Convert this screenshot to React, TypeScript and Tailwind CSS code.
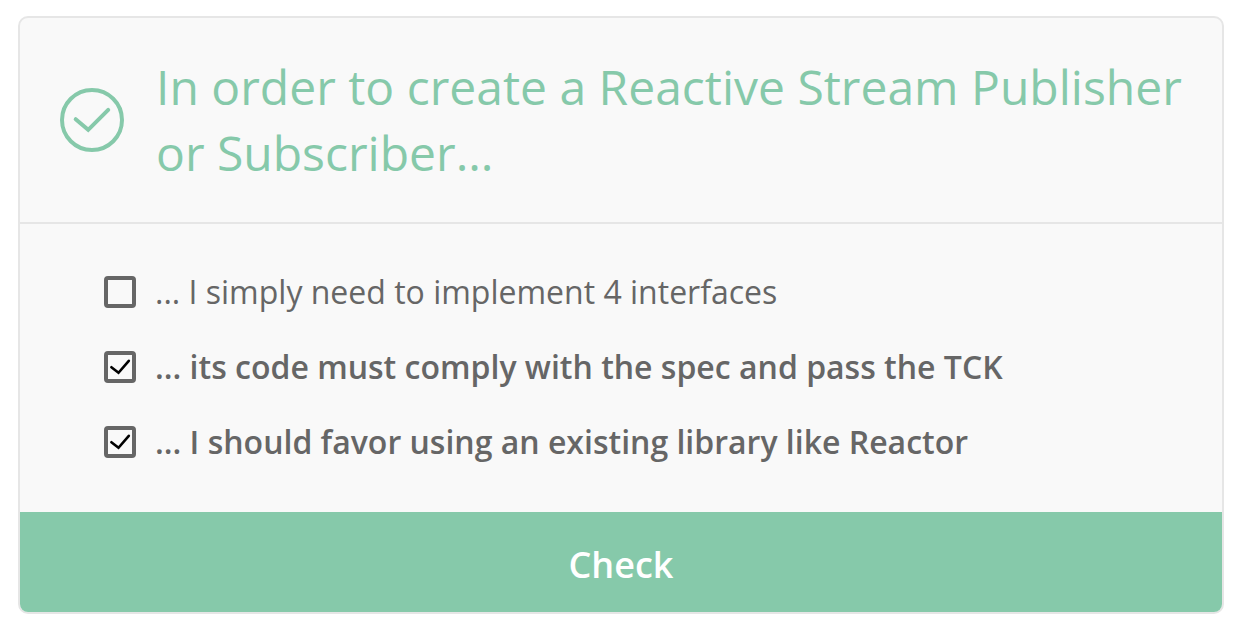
import { useState } from "react";

const answers = [
  { id: "interfaces", text: "... I simply need to implement 4 interfaces" },
  { id: "spec", text: "... its code must comply with the spec and pass the TCK" },
  { id: "library", text: "... I should favor using an existing library like Reactor" },
];

export default function App() {
  const [checked, setChecked] = useState<string[]>(["spec", "library"]);

  const toggle = (id: string) =>
    setChecked((prev) => (prev.includes(id) ? prev.filter((x) => x !== id) : [...prev, id]));

  return (
    <main className="min-h-screen bg-white pt-4 pr-4 pb-3 pl-[18px] font-['Open_Sans',sans-serif]">
      <form
        onSubmit={(e) => e.preventDefault()}
        className="overflow-hidden rounded-[10px] border-2 border-[#e6e6e6] bg-[#f9f9f9]"
      >
        <header className="flex items-center gap-8 border-b-2 border-[#e6e6e6] px-10 py-9 text-[#86c9aa]">
          <svg viewBox="0 0 64 64" className="size-16 shrink-0" fill="none" stroke="currentColor" strokeWidth="4" strokeLinecap="round" aria-hidden="true">
            <circle cx="32" cy="32" r="30" />
            <path d="M15.7 31.2 28.2 41.8 48.2 21.8" />
          </svg>
          <h1 className="text-[48px] leading-[66px]">
            In order to create a Reactive Stream Publisher or Subscriber...
          </h1>
        </header>
        <fieldset className="flex flex-col gap-[29px] px-[84px] pt-[45px] pb-[47px]">
          {answers.map(({ id, text }) => {
            const on = checked.includes(id);
            return (
              <label
                key={id}
                htmlFor={id}
                className={`flex items-center gap-[19px] text-[32px] leading-[46px] text-[#666666] ${on ? "font-semibold" : "font-normal"}`}
              >
                <span className="grid size-8 shrink-0">
                  <input
                    id={id}
                    type="checkbox"
                    checked={on}
                    onChange={() => toggle(id)}
                    className="col-start-1 row-start-1 size-8 appearance-none rounded-[4px] border-4 border-[#666666] bg-[#f9f9f9]"
                  />
                  {on && (
                    <svg viewBox="0 0 32 32" className="pointer-events-none col-start-1 row-start-1 size-8" fill="none" stroke="#000" strokeWidth="2.6" strokeLinecap="round" aria-hidden="true">
                      <path d="M7.4 16.2 14.5 21.8 24.8 9.8" />
                    </svg>
                  )}
                </span>
                <span>{text}</span>
              </label>
            );
          })}
        </fieldset>
        <button type="submit" className="block h-[100px] w-full bg-[#86c9aa] pt-1.5 text-[36px] font-semibold text-white">
          Check
        </button>
      </form>
    </main>
  );
}
